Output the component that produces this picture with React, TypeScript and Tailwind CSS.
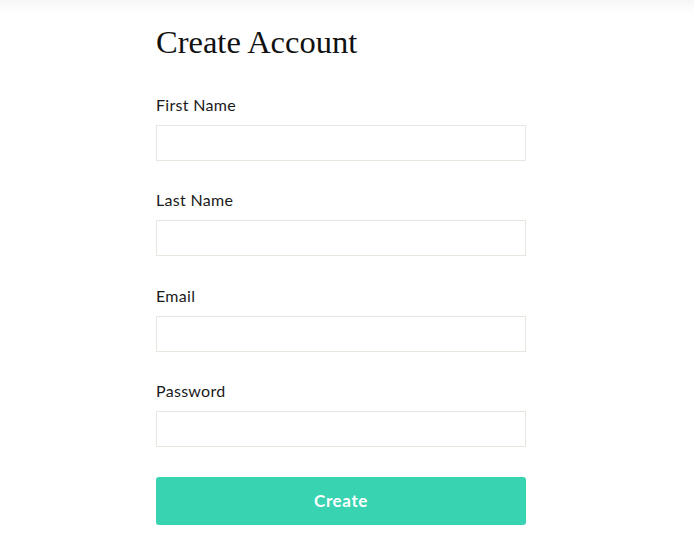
import React, { useState } from 'react';

const fields = [
  { name: 'firstName', label: 'First Name', type: 'text', gap: 'mb-[29px]' },
  { name: 'lastName', label: 'Last Name', type: 'text', gap: 'mb-[30px]' },
  { name: 'email', label: 'Email', type: 'email', gap: 'mb-[29px]' },
  { name: 'password', label: 'Password', type: 'password', gap: 'mb-[29px]' },
];

const App: React.FC = () => {
  const [values, setValues] = useState<Record<string, string>>({});

  const handleSubmit = (e: React.FormEvent) => {
    e.preventDefault();
  };

  return (
    <div className="min-h-screen bg-white font-['Lato',sans-serif]">
      <div className="h-[14px] bg-gradient-to-b from-[#f6f6f6] to-white" />

      <div className="w-[370px] ml-[156px] pt-[10px]">
        <h1 className="text-[32.5px] leading-[36px] text-[#111] font-['Liberation_Serif',serif]">Create Account</h1>

        <form onSubmit={handleSubmit} className="mt-[35px]">
          {fields.map((f) => (
            <div key={f.name} className={f.gap}>
              <label className="block text-[16px] leading-[20px] text-[#1a1a1a] tracking-[0.3px] mb-[10px]">
                {f.label}
              </label>
              <input
                type={f.type}
                value={values[f.name] || ''}
                onChange={(e) => setValues({ ...values, [f.name]: e.target.value })}
                className="block w-full h-[36px] border border-[#e8e6df] bg-white px-3 outline-none"
              />
            </div>
          ))}

          <button
            type="submit"
            className="w-full h-[48px] mt-[1px] rounded-[3px] bg-[#38d3b1] text-white text-[17px] font-bold tracking-[0.6px]"
          >
            Create
          </button>
        </form>
      </div>
    </div>
  );
};

export default App;
